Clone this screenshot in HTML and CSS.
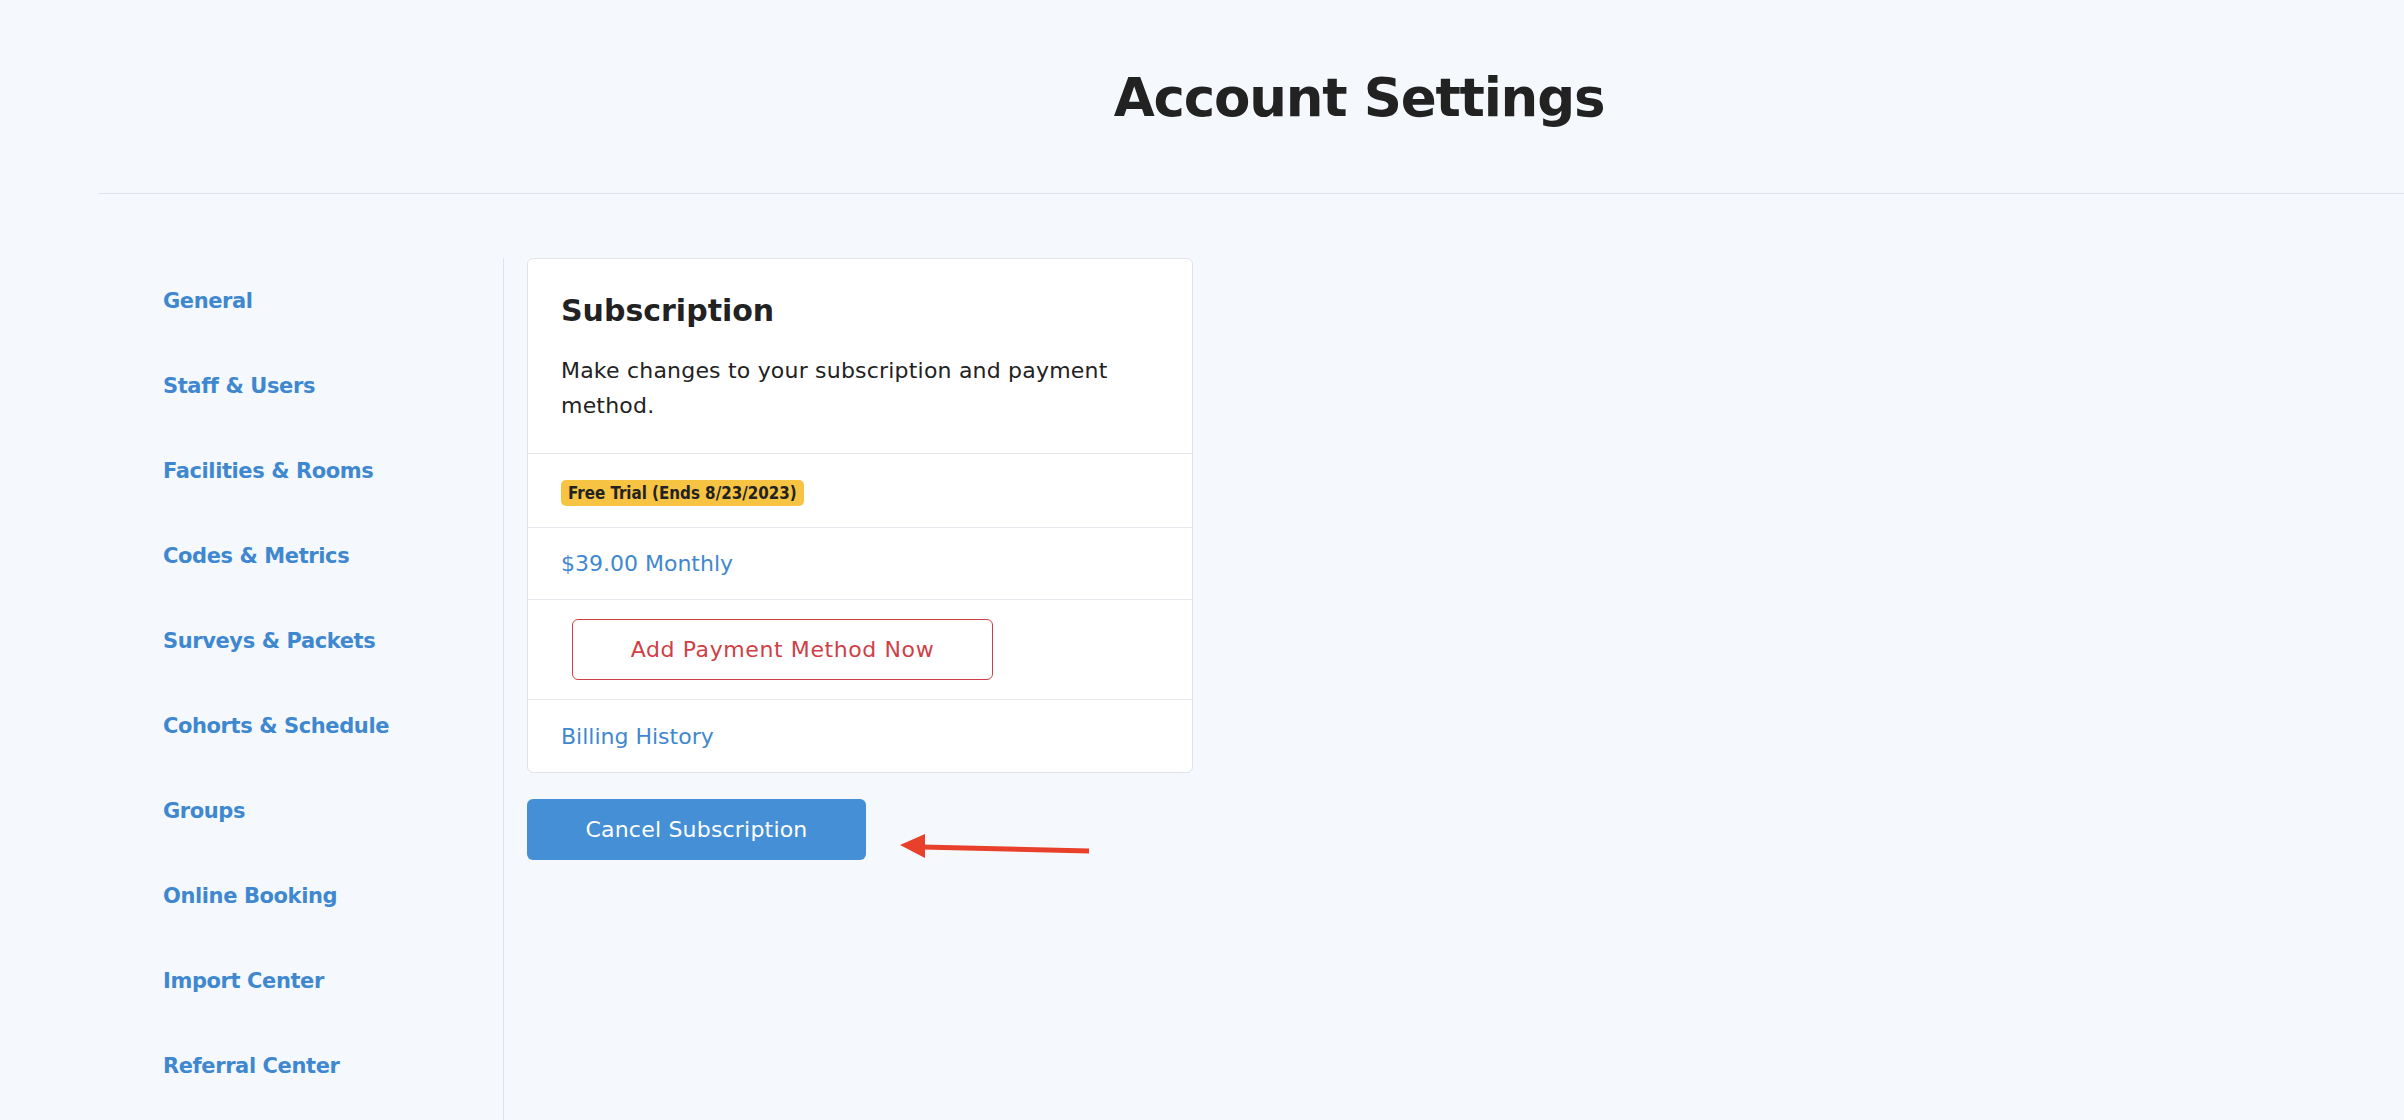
FILE: index.html
```html
<!DOCTYPE html>
<html lang="en">
<head>
<meta charset="utf-8">
<title>Account Settings</title>
<link rel="stylesheet" href="styles.css">
</head>
<body>
<div class="page">
  <header class="page-header">
    <h1 class="page-title">Account Settings</h1>
  </header>
  <div class="layout">
    <nav class="sidebar">
      <a class="nav-link" href="#">General</a>
      <a class="nav-link" href="#">Staff &amp; Users</a>
      <a class="nav-link" href="#">Facilities &amp; Rooms</a>
      <a class="nav-link" href="#">Codes &amp; Metrics</a>
      <a class="nav-link" href="#">Surveys &amp; Packets</a>
      <a class="nav-link" href="#">Cohorts &amp; Schedule</a>
      <a class="nav-link" href="#">Groups</a>
      <a class="nav-link" href="#">Online Booking</a>
      <a class="nav-link" href="#">Import Center</a>
      <a class="nav-link" href="#">Referral Center</a>
    </nav>
    <main class="content">
      <section class="card">
        <div class="card-head">
          <h2 class="card-title">Subscription</h2>
          <p class="card-desc">Make changes to your subscription and payment method.</p>
        </div>
        <div class="row row-badge"><span class="badge">Free Trial (Ends 8/23/2023)</span></div>
        <div class="row row-text"><a class="link" href="#">$39.00 Monthly</a></div>
        <div class="row row-button"><button class="btn-outline" type="button">Add Payment Method Now</button></div>
        <div class="row row-text row-last"><a class="link" href="#">Billing History</a></div>
      </section>
      <div class="actions">
        <button class="btn-primary" type="button">Cancel Subscription</button>
        <svg class="arrow" width="200" height="40" viewBox="0 0 200 40" aria-hidden="true">
          <polygon points="25,15.5 192,19.5 192,24.5 25,20.5" fill="#e8402a"/>
          <polygon points="3,16 28,5 28,29" fill="#e8402a"/>
        </svg>
      </div>
    </main>
  </div>
</div>
</body>
</html>
```
FILE: styles.css
```css
* { box-sizing: border-box; }

html, body {
  margin: 0;
  padding: 0;
  background: #f5f9fd;
}

body {
  font-family: "DejaVu Sans", "Noto Sans", sans-serif;
  color: #222;
  min-height: 1120px;
}

.page {
  padding-left: 98px;
}

.page-header {
  padding: 66px 0 63px 216px;
  border-bottom: 1px solid #dfe4ea;
  text-align: center;
}

.page-title {
  margin: 0;
  font-size: 53px;
  line-height: 64px;
  font-weight: 700;
  letter-spacing: -1.2px;
  color: #222;
}

.layout {
  display: flex;
  padding-top: 64px;
}

.sidebar {
  width: 406px;
  flex: none;
  border-right: 1px solid #e0e4ea;
  padding-left: 65px;
  padding-top: 1px;
  padding-bottom: 40px;
  display: flex;
  flex-direction: column;
}

.nav-link {
  display: block;
  font-size: 21px;
  line-height: 85px;
  font-weight: 700;
  letter-spacing: -0.4px;
  color: #3f88d0;
  text-decoration: none;
  white-space: nowrap;
}

.content {
  padding-left: 23px;
}

.card {
  width: 666px;
  background: #fff;
  border: 1px solid #e0e4e9;
  border-radius: 6px;
}

.card-head {
  padding: 33px 33px 30px;
  border-bottom: 1px solid #e3e7eb;
}

.card-title {
  margin: 0;
  font-size: 30px;
  line-height: 38px;
  font-weight: 700;
  color: #222;
}

.card-desc {
  margin: 23px 0 0;
  font-size: 22px;
  line-height: 35px;
  letter-spacing: 0.2px;
  color: #222;
}

.row {
  display: flex;
  align-items: center;
  padding: 0 33px;
  border-bottom: 1px solid #e3e7eb;
}

.row-last { border-bottom: 0; }

.row-badge {
  padding-top: 26px;
  padding-bottom: 21px;
}

.badge {
  display: inline-block;
  height: 26px;
  line-height: 26px;
  padding: 0 7px;
  border-radius: 5px;
  background: #f6c343;
  color: #222;
  font-family: "DejaVu Sans Condensed", "DejaVu Sans", sans-serif;
  font-stretch: condensed;
  font-weight: 700;
  font-size: 16.8px;
  white-space: nowrap;
}

.row-text {
  height: 72px;
}

.link {
  font-size: 22px;
  color: #3f88d0;
  text-decoration: none;
}

.row-button {
  padding: 19px 33px 19px 44px;
}

.btn-outline {
  width: 421px;
  height: 61px;
  background: #fff;
  border: 1px solid #cf3f47;
  border-radius: 6px;
  color: #cf3f47;
  font-family: "DejaVu Sans", sans-serif;
  font-size: 22px;
  letter-spacing: 0.6px;
  padding: 0;
}

.actions {
  position: relative;
  margin-top: 26px;
}

.btn-primary {
  width: 339px;
  height: 61px;
  background: #448fd5;
  border: 0;
  border-radius: 6px;
  color: #fff;
  font-family: "DejaVu Sans", sans-serif;
  font-size: 22px;
  letter-spacing: 0.2px;
  padding: 0;
}

.arrow {
  position: absolute;
  left: 370px;
  top: 30px;
}
```
